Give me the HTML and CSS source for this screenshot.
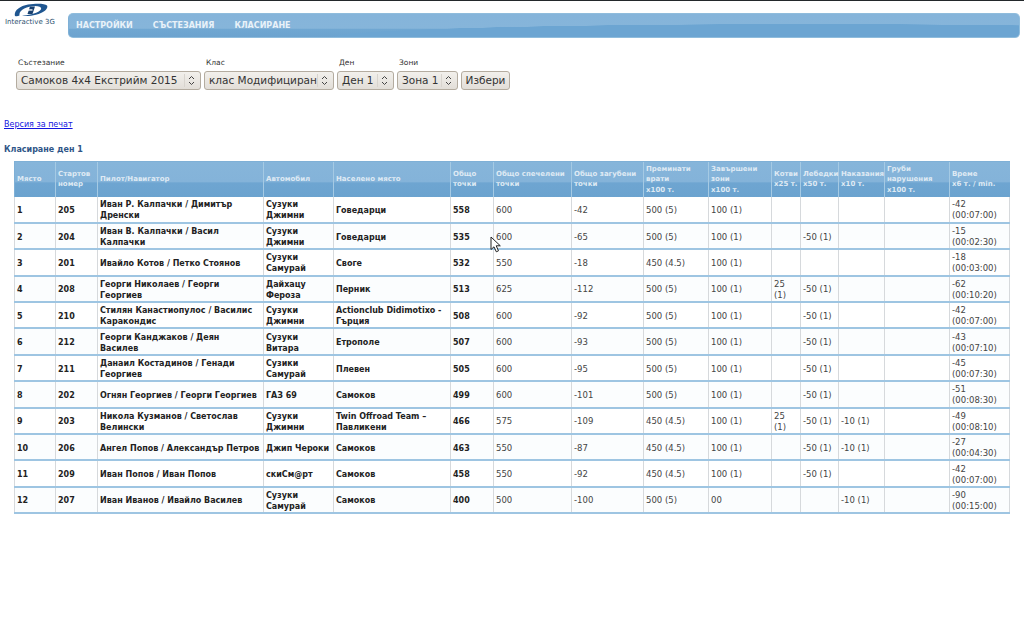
FILE: index.html
```html
<!DOCTYPE html>
<html lang="bg">
<head>
<meta charset="utf-8">
<title>Класиране</title>
<link rel="stylesheet" href="styles.css">
</head>
<body>
<header class="top">
  <div class="logo">
    <svg class="logo-mark" width="34" height="14" viewBox="0 0 34 14">
      <path d="M1 13C-0.500 8.500 5 3 14 1.500C23 0 31 0.500 33 2.500C34.500 5 31 9.500 22 11.800C17 13 11 13.500 8 12.500C13 12.500 22 10.800 26 7.500C28.500 5 27 3 21 3C13 3 4.500 7 5.500 12.500C4 13.300 2.500 13.400 1 13Z" fill="#1f5690"/>
      <path d="M16 3.500L21 3.500L18.500 11L13.500 11Z" fill="#173f6e"/>
      <rect x="13.500" y="6.300" width="5" height="1.300" fill="#fff"/>
    </svg>
    <span class="logo-text">Interactive 3G</span>
  </div>
  <nav class="nav">
    <a>НАСТРОЙКИ</a>
    <a>СЪСТЕЗАНИЯ</a>
    <a>КЛАСИРАНЕ</a>
  </nav>
</header>

<form class="filters">
  <label class="field f-comp"><span>Състезание</span><select><option>Самоков 4x4 Екстрийм 2015</option></select></label>
  <label class="field f-class"><span>Клас</span><select><option>клас Модифициран</option></select></label>
  <label class="field f-day"><span>Ден</span><select><option>Ден 1</option></select></label>
  <label class="field f-zone"><span>Зони</span><select><option>Зона 1</option></select></label>
  <button type="button" class="go">Избери</button>
</form>

<a class="print" href="#">Версия за печат</a>
<h2 class="title">Класиране ден 1</h2>

<table class="rank">
  <colgroup>
    <col class="c1"><col class="c2"><col class="c3"><col class="c4"><col class="c5"><col class="c6"><col class="c7"><col class="c8"><col class="c9"><col class="c10"><col class="c11"><col class="c12"><col class="c13"><col class="c14"><col class="c15">
  </colgroup>
  <thead>
    <tr>
      <th>Място</th><th>Стартов номер</th><th>Пилот/Навигатор</th><th>Автомобил</th><th>Населено място</th><th>Общо точки</th><th>Общо спечелени точки</th><th>Общо загубени точки</th><th>Преминати врати<br><span class="unit">x100 т.</span></th><th>Завършени зони<br><span class="unit">x100 т.</span></th><th>Котви<br><span class="unit">x25 т.</span></th><th>Лебедки<br><span class="unit">x50 т.</span></th><th>Наказания<br><span class="unit">x10 т.</span></th><th>Груби нарушения<br><span class="unit">x100 т.</span></th><th>Време<br><span class="unit">x6 т. / min.</span></th>
    </tr>
  </thead>
  <tbody>
    <tr><td class="b">1</td><td class="b">205</td><td class="b">Иван Р. Калпачки / Димитър Дренски</td><td class="b">Сузуки Джимни</td><td class="b">Говедарци</td><td class="b">558</td><td>600</td><td>-42</td><td>500 (5)</td><td>100 (1)</td><td></td><td></td><td></td><td></td><td>-42 (00:07:00)</td></tr>
    <tr><td class="b">2</td><td class="b">204</td><td class="b">Иван В. Калпачки / Васил Калпачки</td><td class="b">Сузуки Джимни</td><td class="b">Говедарци</td><td class="b">535</td><td>600</td><td>-65</td><td>500 (5)</td><td>100 (1)</td><td></td><td>-50 (1)</td><td></td><td></td><td>-15 (00:02:30)</td></tr>
    <tr><td class="b">3</td><td class="b">201</td><td class="b">Ивайло Котов / Петко Стоянов</td><td class="b">Сузуки Самурай</td><td class="b">Своге</td><td class="b">532</td><td>550</td><td>-18</td><td>450 (4.5)</td><td>100 (1)</td><td></td><td></td><td></td><td></td><td>-18 (00:03:00)</td></tr>
    <tr><td class="b">4</td><td class="b">208</td><td class="b">Георги Николаев / Георги Георгиев</td><td class="b">Дайхацу Фероза</td><td class="b">Перник</td><td class="b">513</td><td>625</td><td>-112</td><td>500 (5)</td><td>100 (1)</td><td>25 (1)</td><td>-50 (1)</td><td></td><td></td><td>-62 (00:10:20)</td></tr>
    <tr><td class="b">5</td><td class="b">210</td><td class="b">Стилян Канастиопулос / Василис Каракондис</td><td class="b">Сузуки Джимни</td><td class="b">Actionclub Didimotixo - Гърция</td><td class="b">508</td><td>600</td><td>-92</td><td>500 (5)</td><td>100 (1)</td><td></td><td>-50 (1)</td><td></td><td></td><td>-42 (00:07:00)</td></tr>
    <tr><td class="b">6</td><td class="b">212</td><td class="b">Георги Канджаков / Деян<br>Василев</td><td class="b">Сузуки Витара</td><td class="b">Етрополе</td><td class="b">507</td><td>600</td><td>-93</td><td>500 (5)</td><td>100 (1)</td><td></td><td>-50 (1)</td><td></td><td></td><td>-43 (00:07:10)</td></tr>
    <tr><td class="b">7</td><td class="b">211</td><td class="b">Данаил Костадинов / Генади Георгиев</td><td class="b">Сузики Самурай</td><td class="b">Плевен</td><td class="b">505</td><td>600</td><td>-95</td><td>500 (5)</td><td>100 (1)</td><td></td><td>-50 (1)</td><td></td><td></td><td>-45 (00:07:30)</td></tr>
    <tr><td class="b">8</td><td class="b">202</td><td class="b">Огнян Георгиев / Георги Георгиев</td><td class="b">ГАЗ 69</td><td class="b">Самоков</td><td class="b">499</td><td>600</td><td>-101</td><td>500 (5)</td><td>100 (1)</td><td></td><td>-50 (1)</td><td></td><td></td><td>-51 (00:08:30)</td></tr>
    <tr><td class="b">9</td><td class="b">203</td><td class="b">Никола Кузманов / Светослав Велински</td><td class="b">Сузуки Джимни</td><td class="b">Twin Offroad Team – Павликени</td><td class="b">466</td><td>575</td><td>-109</td><td>450 (4.5)</td><td>100 (1)</td><td>25 (1)</td><td>-50 (1)</td><td>-10 (1)</td><td></td><td>-49 (00:08:10)</td></tr>
    <tr><td class="b">10</td><td class="b">206</td><td class="b">Ангел Попов / Александър Петров</td><td class="b">Джип Чероки</td><td class="b">Самоков</td><td class="b">463</td><td>550</td><td>-87</td><td>450 (4.5)</td><td>100 (1)</td><td></td><td>-50 (1)</td><td>-10 (1)</td><td></td><td>-27 (00:04:30)</td></tr>
    <tr><td class="b">11</td><td class="b">209</td><td class="b">Иван Попов / Иван Попов</td><td class="b">скиСм@рт</td><td class="b">Самоков</td><td class="b">458</td><td>550</td><td>-92</td><td>450 (4.5)</td><td>100 (1)</td><td></td><td>-50 (1)</td><td></td><td></td><td>-42 (00:07:00)</td></tr>
    <tr><td class="b">12</td><td class="b">207</td><td class="b">Иван Иванов / Ивайло Василев</td><td class="b">Сузуки Самурай</td><td class="b">Самоков</td><td class="b">400</td><td>500</td><td>-100</td><td>500 (5)</td><td>00</td><td></td><td></td><td>-10 (1)</td><td></td><td>-90 (00:15:00)</td></tr>
  </tbody>
</table>

<svg class="cursor" width="12" height="17" viewBox="0 0 12 17">
  <path d="M1 1V13.500L4 10.800L6.300 15.800L8.500 14.800L6.200 9.800H10.300Z" fill="#fff" stroke="#222" stroke-width="1"/>
</svg>
</body>
</html>
```
FILE: styles.css
```css
* { box-sizing: border-box; }

html, body {
  margin: 0;
  padding: 0;
  background: #fff;
}

body {
  position: relative;
  height: 640px;
  overflow: hidden;
  border-top: 1px solid #23282b;
  font-family: "DejaVu Sans", Verdana, sans-serif;
  color: #222;
}

.top {
  display: flex;
  align-items: flex-start;
  height: 37px;
}

.logo {
  width: 68px;
  flex: none;
  display: flex;
  flex-direction: column;
  align-items: flex-start;
  padding: 2px 0 0 5px;
}

.logo-mark {
  display: block;
  margin-left: 9px;
}

.logo-text {
  margin-top: 1px;
  font-size: 7px;
  line-height: 9px;
  color: #2e5170;
  white-space: nowrap;
}

.nav {
  position: relative;
  margin-top: 12px;
  width: 952px;
  height: 25px;
  display: flex;
  align-items: center;
  gap: 20px;
  padding: 0 7px 1px;
  border: 1px solid #8fbcdc;
  border-left-color: #7fb0d6;
  border-radius: 5px;
  background:
    radial-gradient(ellipse 480px 13px at 78% 100%, #6ca5d2 98%, transparent 100%),
    linear-gradient(#85b4da, #86b5da 62%, #70a7d2 66%, #6ca3cf);
}

.nav a {
  font-size: 8px;
  font-weight: bold;
  color: #e9f2f9;
}

.filters {
  display: flex;
  align-items: flex-end;
  padding: 20px 0 0 16px;
  gap: 3px;
}

.field {
  display: flex;
  flex-direction: column;
}

.field span {
  font-size: 7.500px;
  line-height: 10px;
  margin: 0 0 3px 2px;
  color: #333;
}

.f-comp { width: 185px; }
.f-class { width: 130px; }
.f-day { width: 57px; }
.f-zone { width: 61px; }

.field select {
  width: 100%;
  height: 19px;
  padding: 0 0 1px 4px;
  appearance: none;
  -webkit-appearance: none;
  border: 1px solid #b4aca0;
  border-radius: 3px;
  font-family: "DejaVu Sans", sans-serif;
  font-size: 10.500px;
  color: #333;
  background-color: #ece9e4;
  background-image:
    url("data:image/svg+xml,%3Csvg xmlns='http://www.w3.org/2000/svg' width='7' height='11'%3E%3Cpath d='M1 4L3.500 1.500L6 4M1 7L3.500 9.500L6 7' fill='none' stroke='%23444' stroke-width='1'/%3E%3C/svg%3E"),
    linear-gradient(#d8d4ce, #d8d4ce),
    linear-gradient(#f2f0ec, #e2ded8);
  background-repeat: no-repeat;
  background-position: right 5px center, right 15px center, 0 0;
  background-size: 7px 11px, 1px 13px, 100% 100%;
}

.go {
  width: 49px;
  height: 19px;
  padding: 0 0 1px;
  border: 1px solid #b4aca0;
  border-radius: 3px;
  font-family: "DejaVu Sans", sans-serif;
  font-size: 10.500px;
  color: #333;
  background: linear-gradient(#f2f0ec, #e2ded8);
}

.print {
  display: block;
  margin: 29px 0 0 4px;
  width: max-content;
  font-size: 8px;
  line-height: 11px;
  color: #1414e0;
}

.title {
  margin: 14px 0 0 4px;
  font-size: 8px;
  line-height: 11px;
  font-weight: bold;
  color: #2f5587;
}

.rank {
  margin: 6px 0 0 14px;
  width: 995px;
  table-layout: fixed;
  border-collapse: collapse;
}

.c1 { width: 41px; }
.c2 { width: 42px; }
.c3 { width: 166px; }
.c4 { width: 70px; }
.c5 { width: 117px; }
.c6 { width: 43px; }
.c7 { width: 78px; }
.c8 { width: 72px; }
.c9 { width: 65px; }
.c10 { width: 63px; }
.c11 { width: 29px; }
.c12 { width: 38px; }
.c13 { width: 46px; }
.c14 { width: 65px; }
.c15 { width: 60px; }

.rank thead tr {
  height: 35px;
  background: linear-gradient(#86b5da, #84b3d9 56%, #6ea5d1 60%, #6ba3cf);
}

.rank th {
  padding: 0 2px;
  border-left: 1px solid #a5cae4;
  border-top: 1px solid #7fb0d6;
  font-size: 7px;
  line-height: 10.500px;
  font-weight: bold;
  text-align: left;
  color: #dfeaf4;
}

.rank th .unit {
  white-space: nowrap;
}

.rank th:first-child { border-left-color: #7fb0d6; }

.rank tbody tr {
  height: 26.400px;
  border-bottom: 2px solid #9ec5e2;
  background: #fff;
}

.rank tbody tr:nth-child(even) { background: #fbfdfe; }

.rank td {
  padding: 2px 2px 0;
  border-left: 1px solid #d6d9dc;
  font-size: 8.500px;
  line-height: 11px;
  color: #444;
}

.rank td:last-child { border-right: 1px solid #d6d9dc; }

.rank td.b {
  font-size: 8px;
  font-weight: bold;
  color: #222;
}

.cursor {
  position: absolute;
  left: 490px;
  top: 235px;
}
```
